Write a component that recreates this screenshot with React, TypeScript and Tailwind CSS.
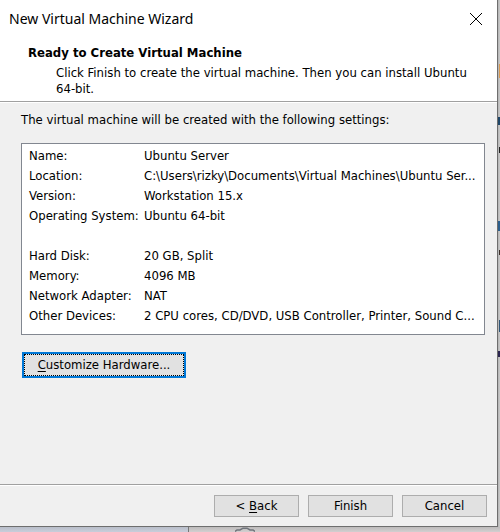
import type { ReactNode } from "react";

type Setting = { label: string; value: string };

const machine: Setting[] = [
  { label: "Name:", value: "Ubuntu Server" },
  { label: "Location:", value: "C:\\Users\\rizky\\Documents\\Virtual Machines\\Ubuntu Ser..." },
  { label: "Version:", value: "Workstation 15.x" },
  { label: "Operating System:", value: "Ubuntu 64-bit" },
];

const hardware: Setting[] = [
  { label: "Hard Disk:", value: "20 GB, Split" },
  { label: "Memory:", value: "4096 MB" },
  { label: "Network Adapter:", value: "NAT" },
  { label: "Other Devices:", value: "2 CPU cores, CD/DVD, USB Controller, Printer, Sound C..." },
];

function SettingRows({ rows }: { rows: Setting[] }) {
  return (
    <tbody>
      {rows.map((row) => (
        <tr key={row.label} className="h-5">
          <th scope="row" className="w-[115px] p-0 text-left font-normal whitespace-nowrap">
            {row.label}
          </th>
          <td className="p-0 whitespace-nowrap">{row.value}</td>
        </tr>
      ))}
    </tbody>
  );
}

function FooterButton({ children }: { children: ReactNode }) {
  return (
    <button
      type="button"
      className="h-[22px] w-[85px] border border-[#adadad] bg-[#e1e1e1] text-center"
    >
      {children}
    </button>
  );
}

/* Slivers of the desktop that show past the right edge of the dialog. */
function DesktopEdge() {
  return (
    <div className="relative w-[2px] shrink-0 overflow-hidden bg-linear-to-r from-[#b4b4b4] to-[#cbcbcb]">
      <span className="absolute top-16 right-0 h-[14px] w-px bg-[#d99a52]" />
      <span className="absolute top-[117px] right-0 h-2 w-[2px] bg-[#1f4668]" />
      <span className="absolute top-[147px] right-0 h-[6px] w-px bg-[#222222]" />
      <span className="absolute top-[221px] right-0 h-[10px] w-[2px] bg-[#2c5f8d]" />
      <span className="absolute top-[250px] right-0 h-[5px] w-px bg-[#3b2f2a]" />
      <span className="absolute top-[320px] right-0 h-3 w-px bg-[#315779]" />
      <span className="absolute top-[351px] right-0 h-[6px] w-[2px] bg-[#2b2550]" />
    </div>
  );
}

export default function App() {
  return (
    <div className="flex h-screen flex-col overflow-hidden font-['DejaVu_Sans_Condensed','DejaVu_Sans',sans-serif] text-[13px] leading-4 text-black">
      <div className="flex min-h-0 flex-1">
        <main className="flex min-w-0 flex-1 flex-col border-r border-b border-[#6e6e6e] bg-[#f0f0f0]">
          <header className="border-b border-[#a0a0a0] bg-white">
            <div className="flex h-[38px] items-center justify-between pr-[14px] pl-[9px]">
              <h1 className="font-['Noto_Sans','Open_Sans',sans-serif] text-[14px] leading-5">
                New Virtual Machine Wizard
              </h1>
              <button type="button" aria-label="Close" className="p-px">
                <svg width="12" height="12" viewBox="0 0 12 12" stroke="#000" fill="none">
                  <path d="M0 0L12 12M12 0L0 12" />
                </svg>
              </button>
            </div>
            <div className="pt-[7px] pr-5 pb-[4px] pl-7">
              <h2 className="font-bold">Ready to Create Virtual Machine</h2>
              <p className="pt-1 pl-7">
                Click Finish to create the virtual machine. Then you can install Ubuntu{" "}
                <span className="whitespace-nowrap">64-bit.</span>
              </p>
            </div>
          </header>

          <section className="flex-1 border-t border-white pt-[9px] pr-3 pl-[21px]">
            <p>The virtual machine will be created with the following settings:</p>
            <div className="mt-[15px] h-[192px] overflow-hidden border border-[#828790] bg-white py-[2px] pl-[7px]">
              <table className="w-full table-fixed border-collapse">
                <SettingRows rows={machine} />
                <tbody aria-hidden="true">
                  <tr className="h-5">
                    <td colSpan={2} />
                  </tr>
                </tbody>
                <SettingRows rows={hardware} />
              </table>
            </div>
            <button
              type="button"
              className="mt-[17px] ml-px h-[26px] w-[164px] border-2 border-[#0078d7] bg-[#e1e1e1]"
            >
              <span className="flex h-full items-center justify-center border border-dotted border-black">
                <span>
                  <span className="underline underline-offset-2">C</span>ustomize Hardware...
                </span>
              </span>
            </button>
          </section>

          <footer className="border-t border-[#a0a0a0]">
            <div className="flex h-[41px] items-center justify-end gap-[9px] border-t border-white pr-[10px]">
              <FooterButton>
                &lt; <span className="underline underline-offset-2">B</span>ack
              </FooterButton>
              <FooterButton>Finish</FooterButton>
              <FooterButton>Cancel</FooterButton>
            </div>
          </footer>
        </main>
        <DesktopEdge />
      </div>

      <div className="flex h-[5px] shrink-0">
        <div className="w-[188px] bg-linear-to-b from-[#b9bec9] to-[#c9cedb]" />
        <div className="flex flex-1 border-l border-[#777777] bg-linear-to-b from-[#bdbbbb] to-[#d2cfd0] pl-[46px]">
          <svg width="20" height="5" viewBox="0 0 20 5" fill="none" stroke="#70757c" strokeWidth="1.5">
            <path d="M0 4.5L2 3H5L8 1.2H12L15 3H18L20 4.5" />
          </svg>
        </div>
      </div>
    </div>
  );
}
